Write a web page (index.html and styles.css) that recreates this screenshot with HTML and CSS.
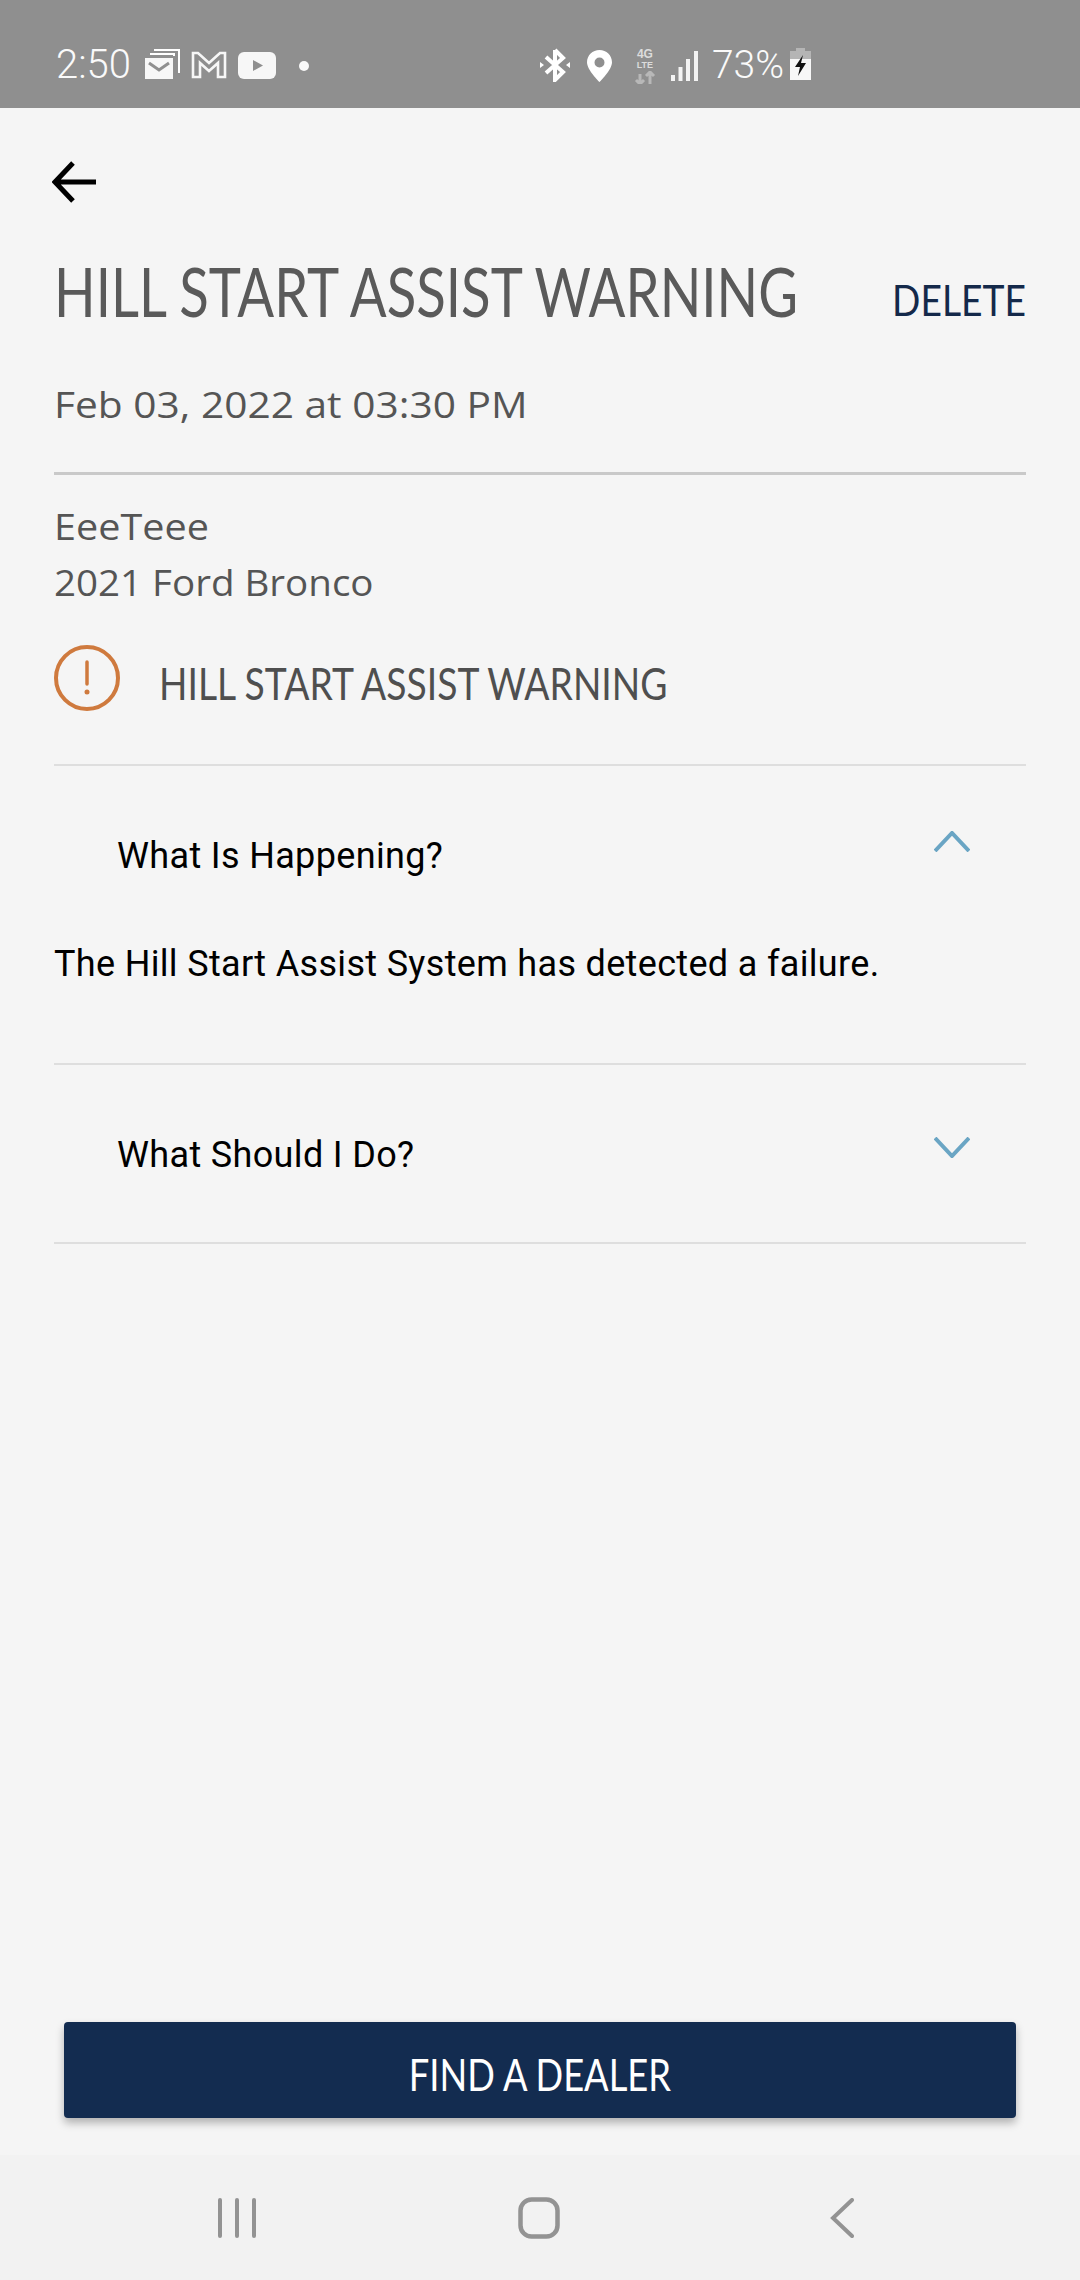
FILE: index.html
```html
<!DOCTYPE html>
<html>
<head>
<title>Hill Start Assist Warning</title>
<meta charset="utf-8">
<link rel="stylesheet" href="styles.css">
</head>
<body>
<div class="page">
  <div class="statusbar">
    <span class="time">2:50</span>
    <svg class="ic-mail" width="36" height="31" viewBox="0 0 36 31"><path d="M10 1h25v23" fill="none" stroke="#fff" stroke-width="2"/><path d="M6 5h24v2" fill="none" stroke="#fff" stroke-width="2"/><path d="M1 9h28v21H1z" fill="#f7f7f7"/><path d="M5 14l10 7 10-7" fill="none" stroke="#8f8f8f" stroke-width="3"/></svg>
    <svg class="ic-gmail" width="36" height="28" viewBox="0 0 36 28"><path d="M2 26V2h5l11 10L29 2h5v24h-7V12l-9 8-9-8v14z" fill="none" stroke="#f7f7f7" stroke-width="2.6"/></svg>
    <svg class="ic-yt" width="38" height="27" viewBox="0 0 38 27"><rect width="38" height="27" rx="6" fill="#f7f7f7"/><path d="M15 8l10 5.500-10 5.500z" fill="#8f8f8f"/></svg>
    <span class="dot"></span>
    <div class="status-right">
      <svg class="ic-bt" width="30" height="34" viewBox="0 0 30 34"><path d="M15 2v30l8-8L6 9M15 2l8 8L6 25" fill="none" stroke="#fff" stroke-width="4"/><path d="M0 14l4 3-4 3zM30 14l-4 3 4 3z" fill="#fff"/></svg>
      <svg class="ic-loc" width="25" height="32" viewBox="0 0 25 32"><path fill-rule="evenodd" d="M12.500 0C5.600 0 0 5.400 0 12.200 0 20 12.500 32 12.500 32S25 20 25 12.200C25 5.400 19.400 0 12.500 0zm0 7.500a5 5 0 1 1 0 10 5 5 0 0 1 0-10z" fill="#fff"/></svg>
      <div class="net">
        <span class="net-4g">4G</span>
        <span class="net-lte">LTE</span>
        <svg width="22" height="13" viewBox="0 0 22 13"><path d="M6 13V3M2 9l4 4 4-4" fill="none" stroke="#b8b8b8" stroke-width="3"/><path d="M16 13V1M12 5l4-4 4 4" fill="none" stroke="#b8b8b8" stroke-width="3"/></svg>
      </div>
      <svg class="ic-sig" width="27" height="30" viewBox="0 0 27 30"><path d="M0 24h4v6H0zM7.500 16h4v14h-4zM15 8h4v22h-4zM23 0h4v30h-4z" fill="#f3f3f3"/></svg>
      <span class="pct">73%</span>
      <svg class="ic-batt" width="21" height="32" viewBox="0 0 21 32"><path d="M6 0h9v3h6v8H0V3h6z" fill="#b5b5b5"/><path d="M0 11h21v21H0z" fill="#f7f7f7"/><path d="M13 7L5 19h5l-2 9 8-13h-5z" fill="#111"/></svg>
    </div>
  </div>

  <div class="content">
    <div class="backrow">
      <svg width="44" height="42" viewBox="0 0 44 42"><path d="M44 21H3M21 2L3 21l18 19" fill="none" stroke="#000" stroke-width="5"/></svg>
    </div>
    <div class="titlerow">
      <h1 class="title">HILL START ASSIST WARNING</h1>
      <span class="delete">DELETE</span>
    </div>
    <div class="date">Feb 03, 2022 at 03:30 PM</div>
    <hr class="rule-thick">
    <div class="owner">EeeTeee</div>
    <div class="vehicle">2021 Ford Bronco</div>
    <div class="alert">
      <svg width="66" height="66" viewBox="0 0 66 66"><ellipse cx="33" cy="33" rx="31" ry="31" fill="none" stroke="#cf7a3e" stroke-width="4"/><path d="M33 17v22" stroke="#cf7a3e" stroke-width="3.500" stroke-linecap="round"/><circle cx="33" cy="47" r="2.500" fill="#cf7a3e"/></svg>
      <span class="alert-text">HILL START ASSIST WARNING</span>
    </div>
    <hr class="rule">
    <div class="acc-head acc-open">
      <span>What Is Happening?</span>
      <svg width="36" height="21" viewBox="0 0 36 21"><path d="M1 20L18 2l17 18" fill="none" stroke="#6aa5c4" stroke-width="4"/></svg>
    </div>
    <p class="acc-body">The Hill Start Assist System has detected a failure.</p>
    <hr class="rule">
    <div class="acc-head acc-closed">
      <span>What Should I Do?</span>
      <svg width="36" height="21" viewBox="0 0 36 21"><path d="M1 1l17 18L35 1" fill="none" stroke="#6aa5c4" stroke-width="4"/></svg>
    </div>
    <hr class="rule">
  </div>

  <div class="footer">
    <button class="dealer"><span>FIND A DEALER</span></button>
  </div>

  <div class="navbar">
    <svg width="38" height="40" viewBox="0 0 38 40"><path d="M2 2v36M19 2v36M36 2v36" stroke="#939393" stroke-width="4" stroke-linecap="round"/></svg>
    <svg class="nav-home" width="42" height="42" viewBox="0 0 42 42"><rect x="2.500" y="2.500" width="37" height="37" rx="11" fill="none" stroke="#939393" stroke-width="4.500"/></svg>
    <svg width="24" height="40" viewBox="0 0 24 40"><path d="M22 2L3 20l19 18" fill="none" stroke="#939393" stroke-width="4" stroke-linecap="round"/></svg>
  </div>
</div>
</body>
</html>
```

FILE: styles.css
```css
html,body{margin:0;padding:0;}
body{background:#f5f5f5;font-family:"Lato","Noto Sans",sans-serif;}
.page{width:1080px;height:2280px;display:flex;flex-direction:column;overflow:hidden;}

.statusbar{height:108px;background:#8f8f8f;display:flex;align-items:center;padding:24px 269px 0 56px;box-sizing:border-box;color:#fafafa;flex:none;}
.statusbar svg{display:block;flex:none;}
.time{font:300 40px "Roboto",sans-serif;margin-right:13px;margin-top:-3px;}
.ic-mail{margin-top:-3px;margin-right:11px;}
.ic-gmail{margin-top:-2px;margin-right:11px;}
.ic-yt{margin-top:-2px;margin-right:23px;}
.dot{width:10px;height:10px;border-radius:50%;background:#fafafa;}
.status-right{margin-left:auto;display:flex;align-items:center;}
.ic-bt{margin-right:17px;margin-top:-2px;}
.ic-loc{margin-right:22px;}
.net{width:22px;margin-right:15px;display:flex;flex-direction:column;align-items:center;color:#dcdcdc;font:700 9px/10px "Liberation Sans",sans-serif;}
.net-4g{font-size:12px;line-height:11px;}
.net svg{margin-top:1px;}
.ic-sig{margin-right:14px;}
.pct{font:300 39px "Roboto",sans-serif;margin-right:6px;margin-top:-2px;}
.ic-batt{margin-top:-4px;}

.content{padding:0 54px;flex:1;}
.backrow{height:108px;padding-top:53px;box-sizing:border-box;}
.backrow svg{display:block;margin-left:-2px;}

.titlerow{display:flex;justify-content:space-between;align-items:flex-end;height:82px;margin-top:34px;}
.title{margin:0;font:400 68px/82px "Lato",sans-serif;color:#5a5a5a;white-space:nowrap;display:inline-block;transform:scaleX(.802);transform-origin:left center;width:742px;}
.delete{font:400 42px/52px "Lato",sans-serif;color:#14294a;transform:scaleX(.887);transform-origin:right center;margin-bottom:6px;}

.date,.owner,.vehicle{font:400 36px/46px "Open Sans",sans-serif;color:#555;transform-origin:left center;}
.date{margin-top:50px;transform:scaleX(1.13);}
.rule-thick{border:0;height:3px;background:#c9c9c9;margin:44px 0 0;}
.rule{border:0;height:2px;background:#dedede;margin:0;}

.owner{margin-top:29px;transform:scaleX(1.1);}
.vehicle{margin-top:10px;transform:scaleX(1.07);}

.alert{display:flex;align-items:center;margin-top:39px;height:66px;margin-bottom:53px;}
.alert svg{display:block;flex:none;}
.alert-text{margin-left:39px;margin-top:10px;font:400 44px/54px "Lato",sans-serif;color:#4f4f4f;white-space:nowrap;display:inline-block;transform:scaleX(.847);transform-origin:left center;}

.acc-head{display:flex;justify-content:space-between;align-items:flex-start;padding:0 56px 0 63px;font:400 36px/44px "Roboto",sans-serif;letter-spacing:.35px;color:#000;}
.acc-head svg{display:block;}
.acc-open{padding-top:68px;}
.acc-open svg{margin-top:-3px;}
.acc-closed{padding-top:68px;height:177px;box-sizing:border-box;}
.acc-closed svg{margin-top:4px;}
.acc-body{margin:64px 0 77px;font:400 36px/44px "Roboto",sans-serif;letter-spacing:.33px;color:#000;}

.footer{padding:0 64px;flex:none;}
.dealer{display:block;width:100%;height:96px;border:0;border-radius:4px;background:#132c50;color:#fff;box-shadow:0 5px 8px rgba(0,0,0,.28);font:400 44px/54px "Lato",sans-serif;padding:7px 0 0;text-align:center;}
.dealer span{display:inline-block;transform:scaleX(.825);white-space:nowrap;}

.navbar{flex:none;height:125px;margin-top:37px;background:#f2f2f2;display:flex;align-items:center;justify-content:space-between;padding:1px 226px 0 218px;box-sizing:border-box;}
.navbar svg{display:block;}
.nav-home{margin-right:8px;}
```
